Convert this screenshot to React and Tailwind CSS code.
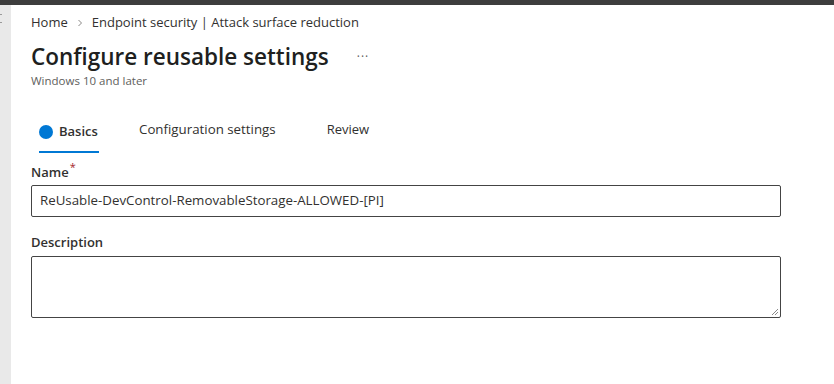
import React from "react";

const font = { fontFamily: '"Open Sans", "Noto Sans", sans-serif' };

export default function App() {
  return (
    <div className="w-[834px] h-[384px] bg-white flex flex-col overflow-hidden text-[#323130]" style={font}>
      {/* Top dark bar */}
      <div className="h-[5px] bg-[#3d3d3d] shrink-0" />

      <div className="flex flex-1">
        {/* Left collapsed rail */}
        <div className="w-[11px] bg-[#e9e9e9] shrink-0 relative">
          <span className="absolute left-0 top-[9px] w-[2px] h-[1px] bg-[#9a9a9a]" />
          <span className="absolute left-0 top-[17px] w-[2px] h-[1px] bg-[#9a9a9a]" />
        </div>

        {/* Main content */}
        <div className="flex-1 pl-[20px] pr-[53px]">
          {/* Breadcrumb */}
          <div className="flex items-center h-[34px] pt-[1px] text-[13px]">
            <span>Home</span>
            <svg className="mx-[9px]" width="6" height="8" viewBox="0 0 6 8">
              <path d="M1.5 1 L4.5 4 L1.5 7" fill="none" stroke="#8a8886" strokeWidth="1" />
            </svg>
            <span>Endpoint security | Attack surface reduction</span>
          </div>

          {/* Title */}
          <div className="flex items-center h-[36px]">
            <h1 className="text-[22.5px] font-semibold text-[#201f1e] leading-none">Configure reusable settings</h1>
            <span className="ml-[28px] text-[12px] text-[#605e5c] tracking-[1px] leading-none">···</span>
          </div>
          <div className="text-[11.5px] text-[#605e5c] leading-none">Windows 10 and later</div>

          {/* Tabs */}
          <div className="flex items-end mt-[28px] h-[38px] text-[13px]">
            <div className="flex flex-col ml-[8px]">
              <div className="flex items-center h-[34px] pb-[4px]">
                <span className="w-[14px] h-[14px] rounded-full bg-[#0078d4] mr-[6px]" />
                <span className="font-semibold">Basics</span>
              </div>
              <div className="h-[2px] bg-[#0078d4] w-[60px]" />
            </div>
            <div className="flex items-center h-[34px] pb-[3px] self-start ml-[40px]">
              <span className="text-[13.3px]">Configuration settings</span>
            </div>
            <div className="flex items-center h-[34px] pb-[3px] self-start ml-[51px]">
              <span>Review</span>
            </div>
          </div>

          {/* Name */}
          <div className="mt-[8px]">
            <div className="flex items-start h-[22px]">
              <span className="text-[13px] font-semibold leading-[22px]">Name</span>
              <span className="text-[#a4262c] text-[11px] leading-none ml-[1px]">*</span>
            </div>
            <div className="mt-[2px] h-[32px] border border-[#444] rounded-[2px] flex items-center px-[8px] text-[13.3px]">
              ReUsable-DevControl-RemovableStorage-ALLOWED-[PI]
            </div>
          </div>

          {/* Description */}
          <div className="mt-[14px]">
            <div className="text-[13px] font-semibold leading-[22px] h-[22px]">Description</div>
            <div className="mt-[3px] h-[62px] border border-[#444] rounded-[2px] relative">
              <svg className="absolute right-[1px] bottom-[1px]" width="9" height="9" viewBox="0 0 9 9">
                <path d="M8 2 L2 8 M8 5 L5 8" stroke="#8a8a8a" strokeWidth="1" />
              </svg>
            </div>
          </div>
        </div>
      </div>
    </div>
  );
}
